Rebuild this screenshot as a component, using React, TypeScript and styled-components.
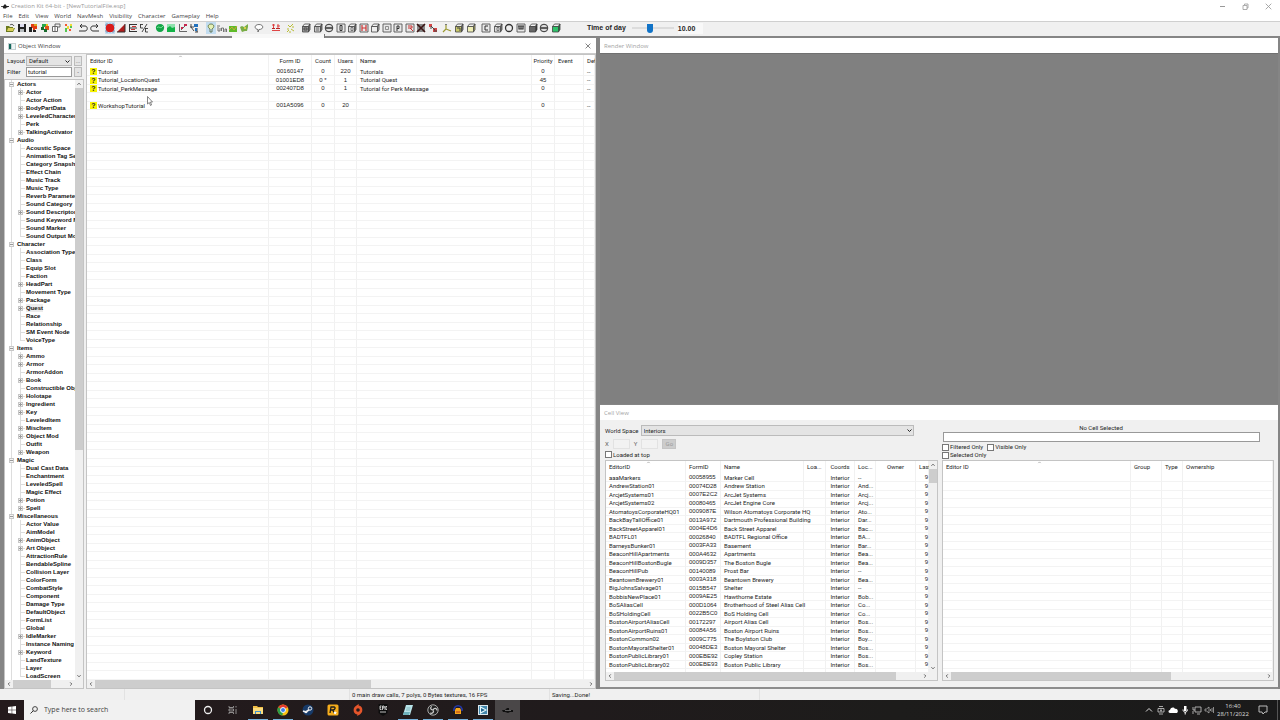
import React from "react";
import styled, { createGlobalStyle, css } from "styled-components";

const uiFont = `Roboto, "Liberation Sans", sans-serif`;
const digitFont = `"Liberation Sans", sans-serif`;
const segoe = `"Open Sans", "Noto Sans", sans-serif`;

const GlobalStyle = createGlobalStyle`
  * { box-sizing: border-box; }
  body { margin: 0; background: #f0f0f0; color: #262626; font: 6px/8px ${uiFont}; }
  button, input, select { font: inherit; color: inherit; margin: 0; padding: 0; border-radius: 0; outline: none; }
  svg { display: block; }
`;

const Page = styled.div`
  height: 100vh;
  display: flex;
  flex-direction: column;
  overflow: hidden;
`;

const TitleBar = styled.header`
  flex: none;
  height: 12px;
  display: flex;
  align-items: center;
  gap: 2px;
  padding: 0 8px 0 1px;
  background: #fff;
  color: #999;
  font: 6px/12px ${segoe};
`;

const AppName = styled.h1`
  margin: 0;
  font: inherit;
  flex: 1;
`;

const WindowButton = styled.button`
  width: 7px;
  height: 7px;
  margin-left: 14px;
  border: 0;
  background: none;
  color: #999;
`;

const MenuBar = styled.nav`
  flex: none;
  height: 9px;
  display: flex;
  gap: 6px;
  padding-left: 3px;
  background: #fff;
`;

const MenuLink = styled.a`
  color: #444;
  text-decoration: none;
  font: 6px/9px ${segoe};
`;

const Toolbar = styled.div`
  position: relative;
  flex: none;
  height: 15px;
  display: flex;
  align-items: center;
  padding: 0 0 2px 5px;
  background: #f0f0f0;
  border-top: 1px solid #cfcfcf;
`;

const ToolGroup = styled.div<{ $width: number; $gap: number }>`
  flex: none;
  display: flex;
  justify-content: space-between;
  width: ${(p) => p.$width}px;
  margin-right: ${(p) => p.$gap}px;
`;

const ToolButton = styled.button<{ $on?: boolean }>`
  width: 10px;
  height: 12px;
  padding: 1px 0;
  border: 0;
  background: ${(p) => (p.$on ? "#c3ddf0" : "none")};
`;

const TimeLabel = styled.label`
  margin-left: 26px;
  font: bold 7px/10px ${digitFont};
`;

const TimeSlider = styled.input`
  appearance: none;
  width: 42px;
  height: 10px;
  margin-left: 6px;
  background: linear-gradient(#dcdcdc, #dcdcdc) center / 100% 2px no-repeat;
  &::-webkit-slider-thumb {
    appearance: none;
    width: 6px;
    height: 9px;
    background: #1173c7;
    border-radius: 0 0 3px 3px;
  }
`;

const TimeValue = styled.output`
  width: 25px;
  margin-left: 4px;
  background: #f8f8f8;
  font: bold 7px/11px ${digitFont};
`;

const DockedEdge = styled.div`
  position: absolute;
  z-index: 2;
  left: 232px;
  top: 12px;
  width: 93px;
  height: 4px;
  background: #f8f8f8;
  border-right: 1px solid #777;
`;

const Workspace = styled.main`
  flex: 1;
  min-height: 0;
  display: grid;
  grid-template-columns: 592fr 678fr;
  gap: 4px;
  padding: 2px 2px 0 4px;
  background: #858585;
`;

const RightColumn = styled.div`
  min-height: 0;
  display: flex;
  flex-direction: column;
  gap: 1px;
`;

const Window = styled.section<{ $grow?: boolean }>`
  position: relative;
  min-width: 0;
  min-height: 0;
  flex: ${(p) => (p.$grow ? "1" : "none")};
  display: flex;
  flex-direction: column;
  background: #f0f0f0;
`;

const WindowTitle = styled.div<{ $muted?: boolean }>`
  flex: none;
  height: 15px;
  display: flex;
  align-items: center;
  gap: 2px;
  padding: 1px 5px 0 4px;
  background: #fff;
  color: ${(p) => (p.$muted ? "#a4a4a4" : "#444")};
  font: 6px/14px ${segoe};
  h2 { margin: 0; font: inherit; flex: 1; }
`;

const CloseButton = styled.button`
  width: 6px;
  height: 6px;
  border: 0;
  background: none;
  color: #555;
`;

const Viewport = styled.div`
  flex: 1;
  background: #808080;
  border-top: 1px solid #707070;
`;

const ObjectBody = styled.div`
  flex: 1;
  min-height: 0;
  display: flex;
  gap: 2px;
  border-top: 1px solid #ccc;
`;

const Sidebar = styled.div`
  flex: none;
  width: 80px;
  min-height: 0;
  display: flex;
  flex-direction: column;
`;

const FilterRow = styled.div`
  flex: none;
  display: grid;
  grid-template-columns: 17px 46px 8px;
  column-gap: 2px;
  align-items: center;
  height: 11px;
  padding-left: 3px;
`;

const FilterBlock = styled.div`
  padding: 1px 0 2px;
`;

const SelectBox = styled.span<{ $height: number }>`
  position: relative;
  flex: 1;
  display: block;
  height: ${(p) => p.$height}px;
  select {
    appearance: none;
    display: block;
    width: 100%;
    height: 100%;
    padding: 0 2px;
    border: 1px solid #bbb;
    background: #e4e4e4;
  }
  svg { position: absolute; right: 2px; top: 3px; width: 5px; height: 5px; pointer-events: none; }
`;

const TextInput = styled.input<{ $width?: number; $faint?: boolean }>`
  width: ${(p) => (p.$width ? p.$width + "px" : "100%")};
  height: 10px;
  padding: 0 1px;
  border: 1px solid ${(p) => (p.$faint ? "#e2e2e2" : "#999")};
  background: ${(p) => (p.$faint ? "#f2f2f2" : "#fff")};
`;

const SmallButton = styled.button<{ $disabled?: boolean }>`
  height: 10px;
  border: 1px solid ${(p) => (p.$disabled ? "#c4c4c4" : "#bbb")};
  background: ${(p) => (p.$disabled ? "#ccc" : "#e4e4e4")};
  color: ${(p) => (p.$disabled ? "#999" : "#555")};
  line-height: 6px;
  text-align: center;
`;

const GoButton = styled(SmallButton)`
  width: 14px;
`;

const Pane = styled.div`
  flex: 1;
  min-width: 0;
  min-height: 0;
  display: flex;
  flex-direction: column;
  background: #fff;
  border: 1px solid #c4c4c4;
`;

const PaneRow = styled.div`
  flex: 1;
  min-height: 0;
  display: flex;
  overflow: hidden;
`;

const Clip = styled.div`
  flex: 1;
  min-width: 0;
  min-height: 0;
  overflow: hidden;
`;

const VBar = styled.div`
  flex: none;
  width: 8px;
  display: flex;
  flex-direction: column;
  background: #f0f0f0;
`;

const HBar = styled.div`
  flex: none;
  height: 8px;
  display: flex;
  background: #f0f0f0;
`;

const HBarCorner = styled(HBar)`
  padding-right: 8px;
`;

const BarButton = styled.button`
  flex: none;
  width: 8px;
  height: 8px;
  padding: 2px;
  border: 0;
  background: none;
  color: #444;
`;

const BarTrack = styled.div<{ $vertical?: boolean }>`
  flex: 1;
  min-height: 0;
  display: flex;
  flex-direction: ${(p) => (p.$vertical ? "column" : "row")};
`;

const Thumb = styled.div<{ $size: string }>`
  flex: 0 0 ${(p) => p.$size};
  background: #cdcdcd;
`;

const TreeList = styled.ul`
  margin: 0;
  padding: 0 0 0 4px;
  list-style: none;
  font: bold 6px/8px "Liberation Sans", sans-serif;
  white-space: nowrap;
  color: #111;
`;

const Branch = styled.li`
  background: linear-gradient(#ddd, #ddd) 2px 0 / 1px 100% no-repeat;
`;

const BranchRow = styled.div`
  display: flex;
  align-items: center;
  height: 8px;
  gap: 3px;
`;

const Leaves = styled.ul`
  margin: 0;
  padding: 0 0 0 9px;
  list-style: none;
`;

const Leaf = styled.li<{ $marked?: boolean }>`
  display: flex;
  align-items: center;
  height: 8px;
  gap: 3px;
  background: linear-gradient(#ddd, #ddd) 2px 0 / 1px 100% no-repeat,
    linear-gradient(#ddd, #ddd) 2px 4px / 5px 1px no-repeat;
  &:last-child {
    background: linear-gradient(#ddd, #ddd) 2px 0 / 1px 4px no-repeat,
      linear-gradient(#ddd, #ddd) 2px 4px / 5px 1px no-repeat;
  }
  span { background: ${(p) => (p.$marked ? "#ececec" : "none")}; }
`;

const Expander = styled.button<{ $plus?: boolean }>`
  flex: none;
  width: 5px;
  height: 5px;
  border: 1px solid #c8c8c8;
  background: linear-gradient(#999, #999) center / 3px 1px no-repeat #f4f4f4;
  ${(p) =>
    p.$plus &&
    css`
      background: linear-gradient(#999, #999) center / 3px 1px no-repeat,
        linear-gradient(#999, #999) center / 1px 3px no-repeat #f4f4f4;
    `}
`;

const Spacer = styled.i`
  flex: none;
  width: 5px;
`;

const Grid = styled.table`
  width: 100%;
  table-layout: fixed;
  border-collapse: separate;
  border-spacing: 0;
  th, td {
    padding: 0 0 0 3px;
    white-space: nowrap;
    text-align: left;
    font-weight: normal;
    border-right: 1px solid #f1f1f1;
  }
  th { position: relative; height: 13px; padding-bottom: 2px; line-height: 11px; }
  td { height: 8px; line-height: 7px; border-bottom: 1px solid #f3f3f3; }
  tbody tr:nth-child(even) td { height: 9px; line-height: 8px; }
`;

const Th = styled.th<{ $center?: boolean }>`
  && {
    text-align: ${(p) => (p.$center ? "center" : "left")};
    ${(p) => p.$center && "padding-left: 0;"}
  }
`;

const Td = styled.td<{ $center?: boolean; $right?: boolean; $digits?: boolean }>`
  && {
    text-align: ${(p) => (p.$center ? "center" : p.$right ? "right" : "left")};
    ${(p) => p.$center && "padding: 0;"}
    ${(p) => p.$digits && `font-family: ${digitFont};`}
  }
`;

const SortMark = styled.span`
  position: absolute;
  left: 50%;
  top: 0;
  width: 5px;
  height: 3px;
  color: #888;
`;

const FormName = styled.span`
  display: flex;
  align-items: center;
  gap: 1px;
`;

const FormMark = styled.span`
  width: 7px;
  height: 7px;
  background: #f8f400;
  font: bold 7px/7px "Liberation Sans", sans-serif;
  text-align: center;
`;

const CellBody = styled.div`
  flex: 1;
  display: grid;
  grid-template-columns: 333fr 332fr;
  gap: 4px;
  padding: 4px 4px 6px 5px;
  border-bottom: 2px solid #8c8c8c;
`;

const CellPanel = styled.div`
  min-width: 0;
  display: flex;
  flex-direction: column;
`;

const CellControls = styled.div`
  height: 36px;
  display: flex;
  flex-direction: column;
`;

const ControlRow = styled.div<{ $height: number; $gap: number }>`
  flex: none;
  height: ${(p) => p.$height}px;
  display: flex;
  align-items: center;
  gap: ${(p) => p.$gap}px;
`;

const WorldSpaceRow = styled(ControlRow)`
  margin-right: 24px;
`;

const CoordRow = styled(ControlRow)`
  color: #666;
`;

const Selected = styled.div`
  padding: 0 14px 0 0;
  text-align: center;
  line-height: 7px;
`;

const CellInput = styled(TextInput)`
  width: auto;
  margin: 1px 14px 1px 1px;
`;

const Check = styled.label`
  display: flex;
  align-items: center;
  gap: 1px;
  input {
    appearance: none;
    width: 7px;
    height: 7px;
    border: 1px solid #777;
    background: #fff;
  }
`;

const CellPane = styled(Pane)`
  height: 221px;
  flex: none;
`;

const StatusBar = styled.footer`
  flex: none;
  height: 11px;
  display: flex;
  background: #f0f0f0;
  line-height: 12px;
`;

const StatusPart = styled.div<{ $width: number }>`
  width: ${(p) => p.$width}px;
  padding-left: 2px;
  border-right: 1px solid #e2e2e2;
  white-space: nowrap;
`;

const Taskbar = styled.footer`
  flex: none;
  height: 20px;
  display: flex;
  align-items: stretch;
  background: linear-gradient(90deg, #241a1c, #201b1c 45%, #1d1c1b 70%, #1a1a1a);
  color: #ddd;
`;

const SearchBox = styled.label`
  width: 171px;
  display: flex;
  align-items: center;
  gap: 6px;
  padding-left: 6px;
  background: #f1f1f1;
  color: #444;
  input {
    flex: 1;
    min-width: 0;
    border: 0;
    background: none;
    font: 7px/18px ${segoe};
  }
  input::placeholder { color: #444; opacity: 1; }
`;

const TaskButton = styled.button<{ $running?: boolean; $active?: boolean; $width?: number }>`
  flex: none;
  width: ${(p) => p.$width || 25}px;
  display: flex;
  align-items: center;
  justify-content: center;
  border: 0;
  background: ${(p) => (p.$active ? "#4a4748" : "none")};
  ${(p) =>
    p.$running &&
    css`
      background: linear-gradient(#76b2dc, #76b2dc) center bottom / 20px 1px no-repeat;
    `}
`;

const Tray = styled.div`
  display: flex;
  align-items: center;
  gap: 2px;
  margin-left: auto;
`;

const TrayButton = styled.button`
  width: 10px;
  height: 10px;
  border: 0;
  background: none;
  color: #ddd;
`;

const Clock = styled.time`
  width: 34px;
  text-align: center;
  font: 6px/8px ${segoe};
`;

const Notice = styled(TrayButton)`
  margin: 0 5px 0 4px;
  width: 14px;
`;

const ShowDesktop = styled.button`
  align-self: stretch;
  width: 3px;
  border: 0;
  border-left: 1px solid #555;
  background: none;
`;

const Pointer = styled.svg`
  position: absolute;
  left: 143px;
  top: 58px;
  width: 6px;
  height: 10px;
`;

type Dir = "up" | "down" | "left" | "right";
const arrows: Record<Dir, string> = {
  up: "M1 7 5 3l4 4",
  down: "M1 3l4 4 4-4",
  left: "M7 1 3 5l4 4",
  right: "M3 1l4 4-4 4",
};
const Chevron = ({ dir }: { dir: Dir }) => (
  <svg viewBox="0 0 10 10" width="100%" height="100%" fill="none" stroke="currentColor" strokeWidth="2">
    <path d={arrows[dir]} />
  </svg>
);

const Cross = () => (
  <svg viewBox="0 0 10 10" width="100%" height="100%" fill="none" stroke="currentColor" strokeWidth="1.2">
    <path d="M1 1l8 8M9 1 1 9" />
  </svg>
);

const HScroll = ({ size, corner }: { size: string; corner?: boolean }) => {
  const Bar = corner ? HBarCorner : HBar;
  return (
    <Bar>
      <BarButton aria-label="Scroll left"><Chevron dir="left" /></BarButton>
      <BarTrack><Thumb $size={size} /></BarTrack>
      <BarButton aria-label="Scroll right"><Chevron dir="right" /></BarButton>
    </Bar>
  );
};

const VScroll = ({ size }: { size: string }) => (
  <VBar>
    <BarButton aria-label="Scroll up"><Chevron dir="up" /></BarButton>
    <BarTrack $vertical><Thumb $size={size} /></BarTrack>
    <BarButton aria-label="Scroll down"><Chevron dir="down" /></BarButton>
  </VBar>
);

const Cube = ({ front = "#ddd", side = "#777", children }: { front?: string; side?: string; children?: React.ReactNode }) => (
  <>
    <path d="M1.5 3.5 3.5 1H9L7.5 3.5Z" fill="#f2f2f2" stroke="#444" strokeWidth=".8" />
    <path d="M7.5 3.5 9 1v5.5L7.5 9Z" fill={side} stroke="#444" strokeWidth=".8" />
    <path d="M1.5 3.5h6V9h-6Z" fill={front} stroke="#444" strokeWidth=".8" />
    {children}
  </>
);
const Frame = ({ children }: { children?: React.ReactNode }) => (
  <>
    <path d="M1 1h8v8H1Z" fill="#e8e8e8" stroke="#555" strokeWidth=".9" />
    {children}
  </>
);
const s = (d: string, color = "#333", w = 1) => <path d={d} fill="none" stroke={color} strokeWidth={w} />;
const f = (d: string, color: string) => <path d={d} fill={color} />;

const icons: Record<string, React.ReactNode> = {
  Open: <>{f("M1 9V3h3l1 1h3v1h2L8 9Z", "#6b7a1c")}{f("M2 8l1-3h6L8 8Z", "#d9cf5a")}{s("M5 2c1-1 3-1 4 1", "#333", 0.8)}</>,
  Save: <>{f("M1 1h8v8H1Z", "#222")}{f("M3 1h4v3H3Z", "#dde")}{f("M3 6h4v3H3Z", "#b8bdc0")}</>,
  "Load data": <>{f("M3 1h4l2 2v3H7v2H5V5H3Z", "#e23b12")}{f("M1 4h3v5H1ZM5 7h3v2H5Z", "#222")}{f("M6 1h3v2H6Z", "#d6a51c")}</>,
  "Load mods": <>{f("M2 1h4v3H2Z", "#2aa84a")}{f("M5 3h4v4H5Z", "#e2521c")}{f("M1 4h3v3H1ZM4 6h3v3H4Z", "#1a6b2e")}{f("M6 1h2v2H6Z", "#e8c11c")}</>,
  Preferences: <>{f("M1 3h6v6H1Z", "#fff")}{s("M1.5 3.5h5v5h-5ZM4 3V1h5v3H7M3 5h2M3 7h2", "#555", 0.9)}</>,
  Regions: <>{f("M2 1h2v2H2ZM6 6h2v2H6Z", "#f05a32")}{f("M4 3h2v3H4ZM7 1h2v2H7Z", "#f1d935")}{f("M2 5h2v4H2ZM7 3h2v2H7Z", "#55c653")}</>,
  Undo: s("M1 8h6c3 0 3-5 0-5H2M4 1 2 3l2 2"),
  Redo: s("M9 8H3C0 8 0 3 3 3h5M6 1l2 2-2 2"),
  "Snap to grid": <>{s("M0 2h10M0 5h10M0 8h10M2 0v10M5 0v10M8 0v10", "#5a6f93", 0.6)}{f("M3 1h4l2 2v4L7 9H3L1 7V3Z", "#d91b1b")}</>,
  "Snap to angle": <>{f("M1 9 9 1v8Z", "#b01d1d")}{s("M1 9h8M9 1v8", "#333")}</>,
  "Snap to reference": <>{s("M1 1.5h8M1 5h8M1 8.500h8M1.500 1v8", "#333")}{f("M4 3h4v1H4ZM3 6h4v1H3Z", "#c33")}</>,
  "Snap to percent": s("M1 1.500h3M1.500 1v4H4M8 1 3 9M6 5.500h3M6.500 5v4H9", "#333", 0.9),
  "World heightmap": <>{f("M5 1c6 0 5 8 0 8S-1 1 5 1Z", "#14a548")}{s("M2 5c2-3 3 2 6-2", "#7be49b")}</>,
  "Edit landscape": <>{f("M1 1h8v8H1Z", "#8fe2ae")}{f("M1 9V5l3-2 2 2 3-1v5Z", "#13b347")}</>,
  "Path grid": <>{s("M1.500 1v7.500H9M3 7l4-4", "#444", 0.8)}{f("M6 1h3v2H6ZM3 4h2v2H3Z", "#c6264e")}</>,
  Havok: <>{s("M2 1v3l3 4M1 4h4M6 9h3M8 5v4", "#333", 0.9)}{f("M5 1h4v3H5ZM6 5h2v3H6Z", "#2372bd")}</>,
  "Bright light": <>{f("M5 1c4 0 4 4 1 5H4C1 5 1 1 5 1Z", "#e5f1b5")}{s("M4 6C1 4 2 1 5 1s4 3 1 5v3H4Z", "#52653c", 0.8)}</>,
  "Local map": s("M1 2v6h2V5M4.500 8V5h2v4M8 9V6h1.500v3M2 3h1", "#666", 0.9),
  "Show water": <>{f("M1 3h8v6H1Z", "#5ebb29")}{s("M1 7l3-3 2 3 3-4", "#e8a53b", 0.8)}</>,
  "Show grass": <>{f("M3 3l2 1 4-3v3l-1 4H6L3 9 2 7 1 4Z", "#79ad46")}{f("M5 4h2v2H5Z", "#d7cf48")}</>,
  Dialogue: <path d="M5 1.500c5 0 5 5 0 5L4 9V6.500C0 6 0 1.500 5 1.500Z" fill="#fff" stroke="#555" strokeWidth=".8" />,
  Markers: <>{s("M1 2h3M2.500 1v4M1 7.500h8M7 1v4M6 3h3", "#d33", 0.9)}{f("M1 5h3v1H1ZM5 5h4v1H5Z", "#b22")}</>,
  Particles: s("M3 2 5 4 8 1M2 6h2M6 6l3 2M2 9l2-2M7 4h2M5 8v2", "#b9bd35"),
  "Box trigger": <Cube front="#999">{s("M3 5h3v2H3Z", "#333", 0.7)}</Cube>,
  "Sphere trigger": <Cube front="#ccc">{s("M3 5h3M3 7h3", "#555", 0.8)}</Cube>,
  Disc: <><circle cx="5" cy="5" r="3.8" fill="#ddd" stroke="#333" />{s("M2 5h6", "#333", 1.5)}</>,
  Portal: <Frame>{s("M4 2.500h2v5H4Z")}</Frame>,
  Room: <Cube>{s("M4 4.500h2v3H4Z", "#555", 0.7)}</Cube>,
  Collision: <Frame>{s("M3 2v6M7 2v6M3 5h4", "#c33", 1.2)}</Frame>,
  Box: <Cube front="#eee" side="#aaa" />,
  "Occlusion plane": <Frame>{s("M3.500 3.500h3v3h-3Z", "#777", 0.8)}</Frame>,
  Primitive: <Frame>{s("M4 8V3h2v2.500H4")}</Frame>,
  "Sound marker": <Frame>{s("M3 3h4v2H3M5 5l3 3", "#c33")}</Frame>,
  "Hide markers": <>{f("M1 1h8v8H1Z", "#888")}{s("M1 1l8 8M9 1 1 9", "#3c1515", 1.6)}</>,
  Link: <>{f("M1 1h3v3H1ZM5 5h4v4H5Z", "#d34545")}{s("M3 3l4 4M2 5h2M6 8h3", "#444")}</>,
  Axis: <>{s("M4 2v4L1 9M4 6l5 2", "#9c9a32", 1.2)}{f("M3 1h2v1H3Z", "#777")}</>,
  "Cube map": <Cube front="#c8c86a">{s("M3 5h3v3", "#444")}</Cube>,
  "Light cube": <Cube front="#efefb5" side="#aaa860" />,
  Cell: <Frame>{s("M7 3H4v4h3")}</Frame>,
  Ring: <circle cx="5" cy="5" r="3.500" fill="#eee" stroke="#333" strokeWidth="1.3" />,
  Wire: <Frame>{s("M2 3h6M3 3v3h4V3M5 3v3", "#333", 1.2)}</Frame>,
  "Dark cube": <Cube front="#666" side="#333" />,
  "Green cube": <Cube front="#2fc26a" side="#17803f" />,
};

const toolGroups: { width: number; gap: number; items: [string, string?][] }[] = [
  { width: 68, gap: 5, items: [["Open"], ["Save"], ["Load data"], ["Load mods"], ["Preferences"], ["Regions"]] },
  { width: 22, gap: 5, items: [["Undo"], ["Redo"]] },
  { width: 44, gap: 6, items: [["Snap to grid", "on"], ["Snap to angle"], ["Snap to reference"], ["Snap to percent"]] },
  { width: 44, gap: 7, items: [["World heightmap"], ["Edit landscape"], ["Path grid"], ["Havok"]] },
  { width: 43, gap: 5, items: [["Bright light", "on"], ["Local map"], ["Show water"], ["Show grass"]] },
  { width: 10, gap: 7, items: [["Dialogue"]] },
  { width: 10, gap: 4, items: [["Markers"]] },
  { width: 10, gap: 6, items: [["Particles"]] },
  {
    width: 137, gap: 4,
    items: [["Box trigger"], ["Sphere trigger"], ["Disc"], ["Portal"], ["Room"], ["Collision"], ["Box"], ["Occlusion plane"], ["Primitive"], ["Sound marker"], ["Hide markers"], ["Link"]],
  },
  { width: 34, gap: 5, items: [["Axis"], ["Cube map"], ["Light cube"]] },
  { width: 80, gap: 0, items: [["Cell"], ["Room"], ["Ring"], ["Wire"], ["Dark cube"], ["Disc"], ["Green cube"]] },
];

const tree: [string, string[]][] = [
  ["Actors", ["+Actor", "Actor Action", "+BodyPartData", "+LeveledCharacter", "Perk", "+TalkingActivator"]],
  ["Audio", ["Acoustic Space", "Animation Tag Set", "Category Snapshot", "Effect Chain", "Music Track", "Music Type", "Reverb Parameters", "Sound Category", "+Sound Descriptor", "Sound Keyword Map", "Sound Marker", "Sound Output Model"]],
  ["Character", ["Association Type", "Class", "Equip Slot", "Faction", "+HeadPart", "Movement Type", "+Package", "+Quest", "Race", "Relationship", "SM Event Node", "VoiceType"]],
  ["Items", ["+Ammo", "+Armor", "ArmorAddon", "+Book", "Constructible Object", "+Holotape", "+Ingredient", "+Key", "LeveledItem", "+MiscItem", "+Object Mod", "Outfit", "+Weapon"]],
  ["Magic", ["Dual Cast Data", "Enchantment", "LeveledSpell", "Magic Effect", "+Potion", "+Spell"]],
  ["Miscellaneous", ["Actor Value", "AimModel", "+AnimObject", "+Art Object", "AttractionRule", "BendableSpline", "Collision Layer", "ColorForm", "CombatStyle", "Component", "Damage Type", "DefaultObject", "FormList", "Global", "+IdleMarker", "Instance Naming", "+Keyword", "LandTexture", "Layer", "LoadScreen"]],
];

const forms = [
  ["Tutorial", "00160147", "0", "220", "Tutorials", "0", "", "--"],
  ["Tutorial_LocationQuest", "01001ED8", "0 *", "1", "Tutorial Quest", "45", "", "--"],
  ["Tutorial_PerkMessage", "002407D8", "0", "1", "Tutorial for Perk Message", "0", "", "--"],
  ["", "", "", "", "", "", "", ""],
  ["WorkshopTutorial", "001A5096", "0", "20", "", "0", "", "--"],
];

const cells = [
  ["aaaMarkers", "00058955", "Marker Cell", "--"],
  ["AndrewStation01", "00074D28", "Andrew Station", "And..."],
  ["ArcjetSystems01", "0007E2C2", "ArcJet Systems", "Arcj..."],
  ["ArcjetSystems02", "00080465", "ArcJet Engine Core", "Arcj..."],
  ["AtomatoysCorporateHQ01", "0009087E", "Wilson Atomatoys Corporate HQ", "Ato..."],
  ["BackBayTallOffice01", "0013A972", "Dartmouth Professional Building", "Dar..."],
  ["BackStreetApparel01", "0004E4D6", "Back Street Apparel", "Bac..."],
  ["BADTFL01", "00026840", "BADTFL Regional Office", "BA..."],
  ["BarneysBunker01", "0003FA33", "Basement", "Bar..."],
  ["BeaconHillApartments", "000A4632", "Apartments", "Bea..."],
  ["BeaconHillBostonBugle", "0009D357", "The Boston Bugle", "Bea..."],
  ["BeaconHillPub", "00140089", "Prost Bar", "--"],
  ["BeantownBrewery01", "0003A318", "Beantown Brewery", "Bea..."],
  ["BigJohnsSalvage01", "0015B547", "Shelter", "--"],
  ["BobbisNewPlace01", "0009AE25", "Hawthorne Estate", "Bob..."],
  ["BoSAliasCell", "000D1064", "Brotherhood of Steel Alias Cell", "Co..."],
  ["BoSHoldingCell", "0022B5C0", "BoS Holding Cell", "Co..."],
  ["BostonAirportAliasCell", "00172297", "Airport Alias Cell", "Bos..."],
  ["BostonAirportRuins01", "00084A56", "Boston Airport Ruins", "Bos..."],
  ["BostonCommon02", "0009C775", "The Boylston Club", "Boy..."],
  ["BostonMayoralShelter01", "00048DE3", "Boston Mayoral Shelter", "Bos..."],
  ["BostonPublicLibrary01", "000EBE92", "Copley Station", "Bos..."],
  ["BostonPublicLibrary02", "000EBE93", "Boston Public Library", "Bos..."],
];

type Column = { name: string; width?: number; center?: boolean; right?: boolean; sorted?: boolean; digits?: boolean };

const formColumns: Column[] = [
  { name: "Editor ID", width: 182, sorted: true },
  { name: "Form ID", width: 43, center: true, digits: true },
  { name: "Count", width: 23, center: true, digits: true },
  { name: "Users", width: 22, center: true, digits: true },
  { name: "Name" },
  { name: "Priority", width: 23, center: true, digits: true },
  { name: "Event", width: 29 },
  { name: "Def", width: 11 },
];
const cellColumns: Column[] = [
  { name: "EditorID", width: 80, sorted: true },
  { name: "FormID", width: 35, digits: true },
  { name: "Name" },
  { name: "Loa...", width: 22 },
  { name: "Coords", width: 29, center: true },
  { name: "Loc...", width: 21 },
  { name: "Owner", width: 40, center: true },
  { name: "Last", width: 13, right: true, digits: true },
];
const refColumns: Column[] = [
  { name: "Editor ID", sorted: true },
  { name: "Group", width: 31 },
  { name: "Type", width: 21 },
  { name: "Ownership", width: 90 },
];

const DataGrid = ({ columns, rows, blank = 0, marked }: { columns: Column[]; rows: string[][]; blank?: number; marked?: boolean }) => (
  <Clip>
    <Grid>
      <colgroup>
        {columns.map((c) => <col key={c.name} width={c.width} />)}
      </colgroup>
      <thead>
        <tr>
          {columns.map((c) => (
            <Th key={c.name} $center={c.center}>
              {c.name}
              {c.sorted && <SortMark><Chevron dir="up" /></SortMark>}
            </Th>
          ))}
        </tr>
      </thead>
      <tbody>
        {rows.map((row, r) => (
          <tr key={r}>
            {row.map((value, i) => (
              <Td key={i} $center={columns[i].center} $right={columns[i].right} $digits={columns[i].digits}>
                {marked && i === 0 && value ? <FormName><FormMark>?</FormMark>{value}</FormName> : value}
              </Td>
            ))}
          </tr>
        ))}
        {Array.from({ length: blank }, (_, r) => (
          <tr key={"blank" + r}>{columns.map((c) => <Td key={c.name} />)}</tr>
        ))}
      </tbody>
    </Grid>
  </Clip>
);

const taskApps: { name: string; running?: boolean; active?: boolean; art: React.ReactNode }[] = [
  { name: "Cortana", art: <circle cx="6" cy="6" r="3.500" fill="none" stroke="#eee" strokeWidth="1.300" /> },
  { name: "Task view", art: s("M2 2v1.500h4.500V2M2 10V8.500h4.500V10M2 5h4.500v2H2ZM9 2v1.500M9 5v5", "#aaa", 0.8) },
  { name: "File Explorer", running: true, art: <>{f("M1 2h4l1 1h5v7H1Z", "#f0bd45")}{f("M1 4h10v6H1Z", "#fbdc7c")}{f("M3 7h6v3H8V8H4v2H3Z", "#3e92d1")}</> },
  {
    name: "Chrome", running: true,
    art: <>
      <circle cx="6" cy="6" r="5.500" fill="#fbc116" />
      {f("M6 6 1.200 3.300A5.500 5.500 0 0 1 10.800 3.300Z", "#e33b2e")}
      {f("M6 6 1.200 3.300A5.500 5.500 0 0 0 5.500 11.500Z", "#2a9d49")}
      <circle cx="6" cy="6" r="2.500" fill="#3e7fe8" stroke="#fff" strokeWidth=".9" />
    </>,
  },
  { name: "Steam", art: <><circle cx="6" cy="6" r="5.500" fill="#173a68" />{s("M1 7l3 1 4-3", "#eee", 1.6)}<circle cx="8" cy="4.500" r="1.700" fill="#173a68" stroke="#eee" /><circle cx="4" cy="8" r="1.300" fill="#eee" /></> },
  { name: "Rockstar", art: <><rect x=".5" y=".5" width="11" height="11" rx="1.500" fill="#f6ad1c" />{s("M3 9l1-6h3c2 0 1 3-1 3H4M6 6l1 3", "#1c1c1c", 1.3)}{f("M8 7l.6 1 1.400.2-1 .8.2 1.500L8 9.700l-1 .5.2-1.200-.9-1 1.200-.1Z", "#fff")}</> },
  { name: "Origin", art: <>{f("M7 0 6.500 1.500C10 2 11 5 10 8 9 10 7 11 5 12l.5-1.500C2 10 1 7 2 4c1-2 3-3 5-4Z", "#e5552b")}<circle cx="6" cy="6" r="1.800" fill="#241a1c" /></> },
  { name: "Epic Games", art: <>{f("M1.500 0h9v9L6 12 1.500 9Z", "#0c0c0c")}{s("M4.500 2H3v3.500h1.500M3 3.700h1.200M5.500 6V2H7v2H5.500M8 2v4M10 2.500H9v3h1M3 8h6", "#eee", 0.8)}</> },
  { name: "Notepad", running: true, art: <>{f("M4 1h7L8 11H1Z", "#b9e4ea")}{f("M2 8h6l-1 3H1Z", "#6fb3bd")}{s("M4.500 4h4M4 6h4", "#5d9ba3", 0.6)}</> },
  { name: "OBS", running: true, art: <><circle cx="6" cy="6" r="5.200" fill="#222" stroke="#ccc" strokeWidth=".8" />{s("M6 6C3 6 3 3 5 2.500M6 6c1.500-3 4-1.500 4 .5M6 6c1.500 2.500-1 4-3 3", "#ccc", 1.2)}</> },
  { name: "Audacity", running: true, art: <>{s("M2 7C1 0 11 0 10 7", "#2438a8", 1.5)}{f("M3 6l1-2h4l1 2v4H3Z", "#f5a51c")}{s("M4 8h4", "#b5381c")}</> },
  { name: "Media player", running: true, art: <>{f("M1 1h10v10H1Z", "#dce7ec")}{f("M2 2h8v8H2Z", "#4387ac")}{f("M3 2l7 4-7 4Z", "#eafcff")}{f("M4 4l4 2-4 2Z", "#22658e")}</> },
  { name: "Creation Kit", active: true, art: <>{f("M0 6h3l2-2h2v2h4v2H8L6 9 3 8H1Z", "#101010")}{s("M3 6.500h6", "#999", 0.6)}</> },
];

const trayItems: [string, React.ReactNode][] = [
  ["Show hidden icons", s("M2 6.500 5 3.500l3 3", "#ddd", 1)],
  ["Meet now", <>{s("M3 1.500h4M3 9h4M2 3.500h6v3.500H2Z", "#ccc", 0.8)}{f("M4 4.500h2v2H4Z", "#999")}</>],
  ["OneDrive", f("M2 8C0 8 0 5 2 5c1-3 4-3 5-1 3-1 4 4 1 4Z", "#fff")],
  ["Microphone", <>{f("M4 1h2.500v5H4Z", "#fff")}{s("M3 4.500C3 8 7.500 8 7.500 4.500M5.200 7v2.500", "#fff")}</>],
  ["Network", s("M3 2h6v5H3ZM1 2v3h2M5 9h3M1 6v3", "#ccc", 0.8)],
  ["Volume", s("M1 4h1.500L5 2v6L2.500 6H1ZM6.500 4v2M8 3v4M9.500 2v6", "#bbb", 0.7)],
];

export default function App() {
  return (
    <Page>
      <GlobalStyle />
      <TitleBar>
        <svg viewBox="0 0 10 8" width="8" height="8"><path d="M0 4h3l1-2h2l1 2h3v1L7 6 6 7H3L2 5H0Z" fill="#222" /></svg>
        <AppName>Creation Kit 64-bit - [NewTutorialFile.esp]</AppName>
        <WindowButton aria-label="Minimize"><svg viewBox="0 0 7 7" width="7" height="7">{s("M1 3.500h5", "#999")}</svg></WindowButton>
        <WindowButton aria-label="Restore"><svg viewBox="0 0 7 7" width="7" height="7">{s("M1 2.500h4v4H1ZM2.500 2V1H6v4H5", "#999", 0.8)}</svg></WindowButton>
        <WindowButton aria-label="Close"><Cross /></WindowButton>
      </TitleBar>
      <MenuBar>
        {["File", "Edit", "View", "World", "NavMesh", "Visibility", "Character", "Gameplay", "Help"].map((m) => (
          <MenuLink key={m} href="#">{m}</MenuLink>
        ))}
      </MenuBar>
      <Toolbar>
        {toolGroups.map((g, i) => (
          <ToolGroup key={i} $width={g.width} $gap={g.gap}>
            {g.items.map(([name, on]) => (
              <ToolButton key={name} aria-label={name} $on={!!on}>
                <svg viewBox="0 0 10 10" width="10" height="10">{icons[name]}</svg>
              </ToolButton>
            ))}
          </ToolGroup>
        ))}
        <TimeLabel htmlFor="time">Time of day</TimeLabel>
        <TimeSlider id="time" type="range" min="0" max="24" step="0.5" defaultValue="10" />
        <TimeValue htmlFor="time">10.00</TimeValue>
        <DockedEdge />
      </Toolbar>
      <Workspace>
        <Window $grow>
          <WindowTitle>
            <svg viewBox="0 0 8 7" width="8" height="7">{f("M0 0h8v7H0Z", "#c5cfd2")}{f("M1 1h2v5H1Z", "#14695c")}{f("M4 1h3v5H4Z", "#eef6f6")}</svg>
            <h2>Object Window</h2>
            <CloseButton aria-label="Close Object Window"><Cross /></CloseButton>
          </WindowTitle>
          <ObjectBody>
            <Sidebar>
              <FilterBlock>
                <FilterRow>
                  <label htmlFor="layout">Layout</label>
                  <SelectBox $height={10}>
                    <select id="layout"><option>Default</option></select>
                    <Chevron dir="down" />
                  </SelectBox>
                  <SmallButton aria-label="Edit layouts">...</SmallButton>
                </FilterRow>
                <FilterRow>
                  <label htmlFor="filter">Filter</label>
                  <TextInput id="filter" defaultValue="tutorial" />
                  <SmallButton aria-label="Filter options">-</SmallButton>
                </FilterRow>
              </FilterBlock>
              <Pane>
                <PaneRow>
                  <Clip>
                    <TreeList>
                      {tree.map(([name, leaves]) => (
                        <Branch key={name}>
                          <BranchRow><Expander aria-label={"Collapse " + name} />{name}</BranchRow>
                          <Leaves>
                            {leaves.map((leaf) => {
                              const label = leaf.replace("+", "");
                              return (
                                <Leaf key={leaf} $marked={label === "Quest"}>
                                  {leaf[0] === "+" ? <Expander $plus aria-label={"Expand " + label} /> : <Spacer />}
                                  <span>{label}</span>
                                </Leaf>
                              );
                            })}
                          </Leaves>
                        </Branch>
                      ))}
                    </TreeList>
                  </Clip>
                  <VScroll size="62%" />
                </PaneRow>
                <HScroll size="70%" corner />
              </Pane>
            </Sidebar>
            <Pane>
              <PaneRow><DataGrid columns={formColumns} rows={forms} blank={80} marked /></PaneRow>
              <HScroll size="56%" />
            </Pane>
          </ObjectBody>
          <Pointer viewBox="0 0 6 10"><path d="M.5.5v7.500L2.300 6.500l1.200 3 1-.5L3.500 6h2Z" fill="#fff" stroke="#555" strokeWidth=".7" /></Pointer>
        </Window>
        <RightColumn>
          <Window $grow>
            <WindowTitle $muted><h2>Render Window</h2></WindowTitle>
            <Viewport />
          </Window>
          <Window>
            <WindowTitle $muted><h2>Cell View</h2></WindowTitle>
            <CellBody>
              <CellPanel>
                <CellControls>
                  <WorldSpaceRow $height={13} $gap={2}>
                    <label htmlFor="world">World Space</label>
                    <SelectBox $height={11}>
                      <select id="world"><option>Interiors</option></select>
                      <Chevron dir="down" />
                    </SelectBox>
                  </WorldSpaceRow>
                  <CoordRow $height={13} $gap={4}>
                    <label htmlFor="x">X</label>
                    <TextInput id="x" $width={17} $faint disabled />
                    <label htmlFor="y">Y</label>
                    <TextInput id="y" $width={17} $faint disabled />
                    <GoButton $disabled disabled>Go</GoButton>
                  </CoordRow>
                  <ControlRow $height={9} $gap={4}>
                    <Check><input type="checkbox" />Loaded at top</Check>
                  </ControlRow>
                </CellControls>
                <CellPane>
                  <PaneRow>
                    <DataGrid columns={cellColumns} rows={cells.map(([id, form, name, loc]) => [id, form, name, "", "Interior", loc, "", "9"])} blank={2} />
                    <VScroll size="7%" />
                  </PaneRow>
                  <HScroll size="92%" corner />
                </CellPane>
              </CellPanel>
              <CellPanel>
                <CellControls>
                  <Selected>No Cell Selected</Selected>
                  <CellInput aria-label="Reference filter" />
                  <ControlRow $height={8} $gap={4}>
                    <Check><input type="checkbox" />Filtered Only</Check>
                    <Check><input type="checkbox" />Visible Only</Check>
                  </ControlRow>
                  <ControlRow $height={8} $gap={4}>
                    <Check><input type="checkbox" />Selected Only</Check>
                  </ControlRow>
                </CellControls>
                <CellPane>
                  <PaneRow><DataGrid columns={refColumns} rows={[]} blank={26} /></PaneRow>
                  <HScroll size="70%" />
                </CellPane>
              </CellPanel>
            </CellBody>
          </Window>
        </RightColumn>
      </Workspace>
      <StatusBar>
        <StatusPart $width={125} />
        <StatusPart $width={225} />
        <StatusPart $width={200}>0 main draw calls, 7 polys, 0 Bytes textures, 16 FPS</StatusPart>
        <StatusPart $width={210}>Saving...Done!</StatusPart>
      </StatusBar>
      <Taskbar>
        <TaskButton $width={24} aria-label="Start">
          <svg viewBox="0 0 8 8" width="8" height="8">{f("M0 1l3.700-.5v3.300H0ZM4.200.4 8 0v3.800H4.200ZM0 4.200h3.700v3.300L0 7ZM4.200 4.200H8V8l-3.800-.5Z", "#fff")}</svg>
        </TaskButton>
        <SearchBox>
          <svg viewBox="0 0 8 8" width="8" height="8"><circle cx="5" cy="3" r="2.400" fill="none" stroke="#333" strokeWidth=".9" />{s("M3.300 4.700.5 7.500", "#333")}</svg>
          <input aria-label="Search" placeholder="Type here to search" />
        </SearchBox>
        {taskApps.map((a) => (
          <TaskButton key={a.name} aria-label={a.name} $running={a.running} $active={a.active}>
            <svg viewBox="0 0 12 12" width="12" height="12">{a.art}</svg>
          </TaskButton>
        ))}
        <Tray>
          {trayItems.map(([name, art]) => (
            <TrayButton key={name} aria-label={name}><svg viewBox="0 0 10 10" width="10" height="10">{art}</svg></TrayButton>
          ))}
          <Clock>16:40<br />28/11/2022</Clock>
          <Notice aria-label="Notifications"><svg viewBox="0 0 14 10" width="14" height="10">{s("M3 1h8v6H9L7 9 6 7H3Z", "#ccc", 0.9)}</svg></Notice>
          <ShowDesktop aria-label="Show desktop" />
        </Tray>
      </Taskbar>
    </Page>
  );
}
